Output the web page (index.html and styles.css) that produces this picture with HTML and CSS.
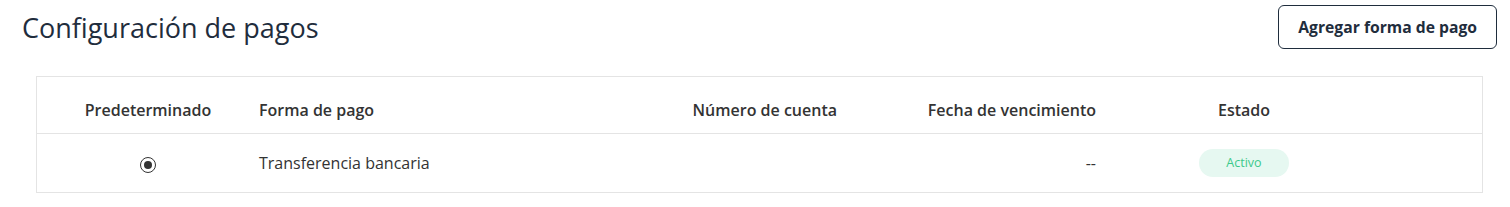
FILE: index.html
```html
<!DOCTYPE html>
<html lang="es">
<head>
    <meta charset="UTF-8">
    <meta name="viewport" content="width=device-width, initial-scale=1.0">
    <title>Configuración de pagos</title>
    <link rel="stylesheet" href="styles.css">
</head>
<body>
    <div class="page">
        <div class="page-header">
            <h1>Configuración de pagos</h1>
            <button class="btn-outline">Agregar forma de pago</button>
        </div>

        <div class="table-wrap">
            <table class="payments">
                <colgroup>
                    <col class="col-default">
                    <col class="col-method">
                    <col class="col-account">
                    <col class="col-expiry">
                    <col class="col-status">
                </colgroup>
                <thead>
                    <tr>
                        <th class="center">Predeterminado</th>
                        <th class="left">Forma de pago</th>
                        <th class="right">Número de cuenta</th>
                        <th class="right">Fecha de vencimiento</th>
                        <th class="center status-cell">Estado</th>
                    </tr>
                </thead>
                <tbody>
                    <tr>
                        <td class="center"><span class="radio checked"></span></td>
                        <td class="left">Transferencia bancaria</td>
                        <td class="right"></td>
                        <td class="right">--</td>
                        <td class="center status-cell"><span class="badge active">Activo</span></td>
                    </tr>
                </tbody>
            </table>
        </div>
    </div>
</body>
</html>
```

FILE: styles.css
```css
:root {
    --text-dark: #1f2d3d;
    --text-color: #333333;
    --border: #e4e4e4;
    --green: #3cc98b;
    --green-bg: #e6f8f1;
}

body {
    margin: 0;
    font-family: 'Open Sans', 'Noto Sans', sans-serif;
    color: var(--text-color);
    background: #ffffff;
}

.page {
    padding: 5px 13px 0 22px;
}

.page-header {
    display: flex;
    align-items: center;
    justify-content: space-between;
    height: 44px;
}

h1 {
    margin: 0;
    font-size: 27px;
    font-weight: 400;
    color: var(--text-dark);
}

.btn-outline {
    height: 44px;
    padding: 0 19px;
    font-family: inherit;
    font-size: 15.7px;
    font-weight: 700;
    color: var(--text-dark);
    background: #ffffff;
    border: 1px solid var(--text-dark);
    border-radius: 6px;
    cursor: pointer;
}

.table-wrap {
    margin: 27px 14px 0 14px;
    border: 1px solid var(--border);
}

.payments {
    width: 100%;
    border-collapse: collapse;
    table-layout: fixed;
    font-size: 16px;
}

.col-default { width: 222px; }
.col-method { width: 341px; }
.col-account { width: 237px; }
.col-expiry { width: 259px; }

th {
    height: 46px;
    padding: 10px 0 0 0;
    font-weight: 600;
    color: var(--text-color);
    border-bottom: 1px solid var(--border);
}

td {
    height: 58px;
    padding: 0;
    color: var(--text-color);
}

.center { text-align: center; }
.left { text-align: left; }
.right { text-align: right; }

th.status-cell,
td.status-cell {
    padding-right: 90px;
}

.radio {
    display: inline-block;
    width: 14px;
    height: 14px;
    border: 1.5px solid #333333;
    border-radius: 50%;
    vertical-align: middle;
    position: relative;
}

.radio.checked::after {
    content: '';
    position: absolute;
    top: 3px;
    left: 3px;
    width: 8px;
    height: 8px;
    border-radius: 50%;
    background: #333333;
}

.badge {
    display: inline-block;
    width: 90px;
    height: 28px;
    line-height: 28px;
    border-radius: 14px;
    font-size: 12.5px;
    font-weight: 500;
    vertical-align: middle;
}

.badge.active {
    background: var(--green-bg);
    color: var(--green);
}
```
